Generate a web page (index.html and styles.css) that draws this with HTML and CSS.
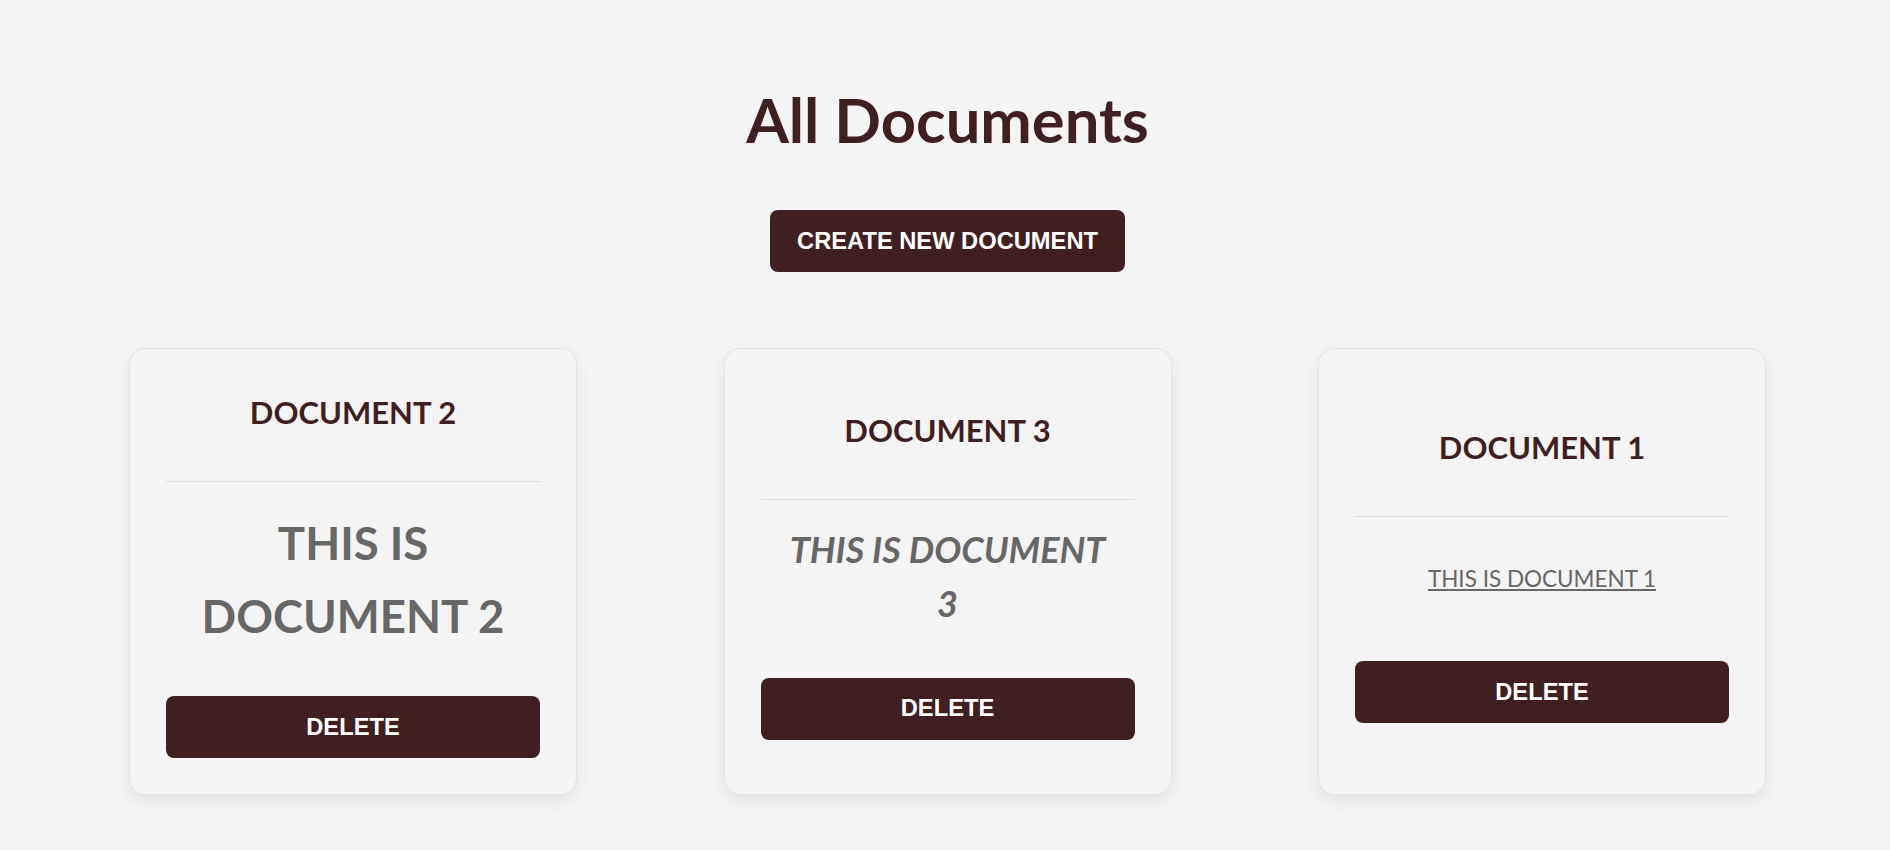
FILE: index.html
```html
<!DOCTYPE html>
<html lang="en">
<head>
<meta charset="utf-8">
<title>All Documents</title>
<link rel="stylesheet" href="styles.css">
</head>
<body>
<main class="page">
  <h1 class="page-title">All Documents</h1>
  <div class="actions">
    <button class="btn btn-create" type="button">CREATE NEW DOCUMENT</button>
  </div>
  <section class="doc-grid">
    <article class="doc-card">
      <h2 class="doc-title">DOCUMENT 2</h2>
      <hr class="doc-divider">
      <div class="doc-body">
        <h1 class="body-h1">THIS IS DOCUMENT 2</h1>
      </div>
      <button class="btn btn-delete" type="button">DELETE</button>
    </article>
    <article class="doc-card">
      <h2 class="doc-title">DOCUMENT 3</h2>
      <hr class="doc-divider">
      <div class="doc-body">
        <p class="body-em"><strong><em>THIS IS DOCUMENT 3</em></strong></p>
      </div>
      <button class="btn btn-delete" type="button">DELETE</button>
    </article>
    <article class="doc-card">
      <h2 class="doc-title">DOCUMENT 1</h2>
      <hr class="doc-divider">
      <div class="doc-body">
        <p class="body-p"><u>THIS IS DOCUMENT 1</u></p>
      </div>
      <button class="btn btn-delete" type="button">DELETE</button>
    </article>
  </section>
</main>
</body>
</html>
```

FILE: styles.css
```css
* { box-sizing: border-box; }

html, body {
  margin: 0;
  background: #f4f4f4;
}

body {
  font-family: Lato, "Open Sans", sans-serif;
  color: #676767;
}

.page {
  display: flex;
  flex-direction: column;
  align-items: center;
  padding: 83px 0 60px 5px;
}

.page-title {
  margin: 0;
  font-size: 61.5px;
  line-height: 72px;
  font-weight: 700;
  color: #401f21;
}

.actions {
  margin-top: 55px;
}

.btn {
  display: inline-flex;
  align-items: center;
  justify-content: center;
  height: 62px;
  border: none;
  border-radius: 8px;
  background: #401f21;
  color: #ffffff;
  font-family: "Liberation Sans", Arial, sans-serif;
  font-weight: 700;
  font-size: 23.7px;
  cursor: pointer;
}

.btn-create {
  padding: 0 27px;
}

.doc-grid {
  margin-top: 76px;
  display: grid;
  grid-template-columns: repeat(3, 448px);
  column-gap: 146.5px;
  justify-content: center;
}

.doc-card {
  display: flex;
  flex-direction: column;
  justify-content: center;
  padding: 36px;
  border: 1px solid #e2e2e2;
  border-radius: 16px;
  background: #f4f4f4;
  box-shadow: 0 6px 16px rgba(0, 0, 0, 0.08);
  text-align: center;
}

.doc-title {
  margin: 3px 0 45px;
  font-size: 31px;
  line-height: 48px;
  font-weight: 700;
  color: #401f21;
}

.doc-divider {
  margin: 0;
  border: none;
  border-top: 1px solid #dedede;
}

.doc-body {
  padding: 24px 25px 44px;
}

.body-h1 {
  margin: 0;
  font-size: 45.5px;
  line-height: 73px;
  font-weight: 700;
}

.body-em {
  margin: -2.5px 0 4px;
  font-size: 36px;
  line-height: 54px;
}

.body-p {
  margin: 19px 0;
  font-size: 22.5px;
  line-height: 38px;
}

.btn-delete {
  width: 100%;
}
```
